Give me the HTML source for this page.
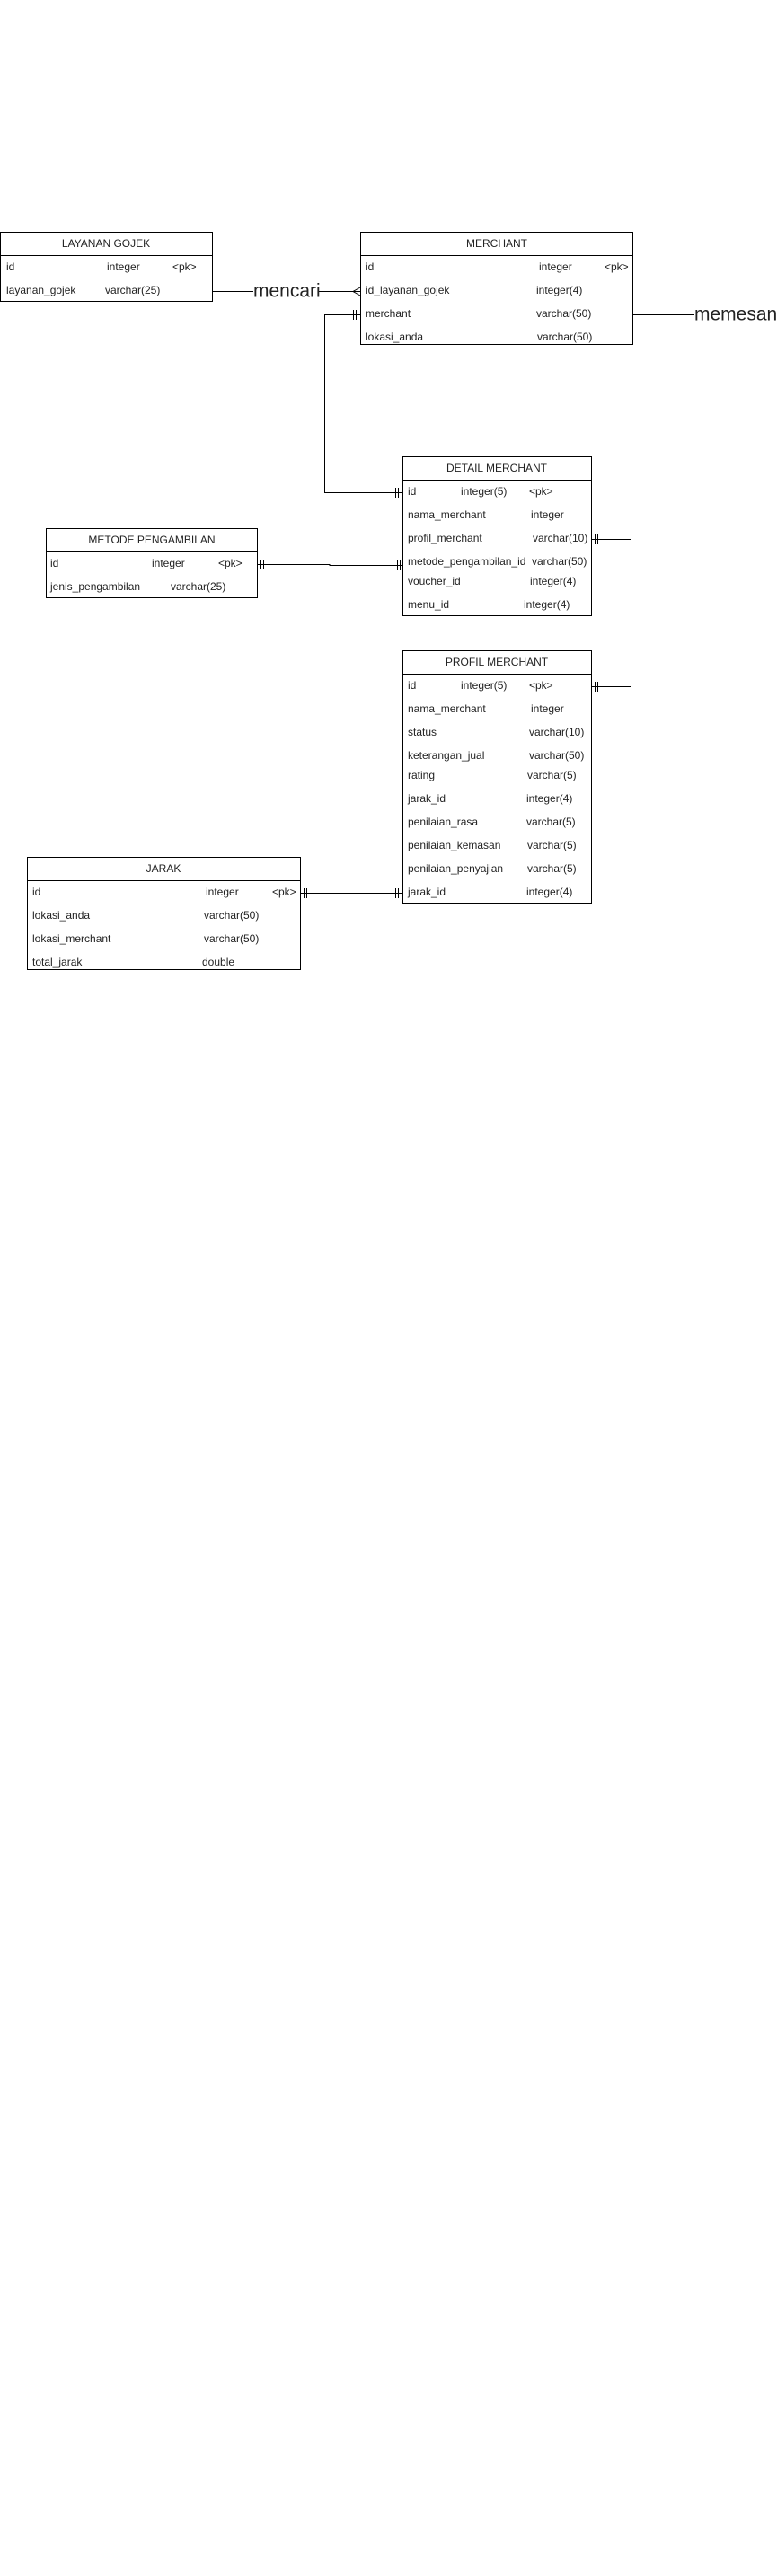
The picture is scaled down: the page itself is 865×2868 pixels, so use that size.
<!DOCTYPE html>
<html><head><meta charset="utf-8"><style>
html,body{margin:0;padding:0;background:#fff;}
svg{display:block;}
text{font-family:"Liberation Sans",Arial,sans-serif;font-size:12px;fill:#222;dominant-baseline:middle;}
.big{font-size:21px;}
</style></head><body>
<svg width="865" height="2868" viewBox="0 0 865 2868" xmlns="http://www.w3.org/2000/svg">
<g fill="none" stroke="#000" stroke-width="1">
<rect x="0.5" y="258.5" width="236" height="77"/>
<line x1="0" y1="284.5" x2="237" y2="284.5"/>
<rect x="401.5" y="258.5" width="303" height="125"/>
<line x1="401" y1="284.5" x2="705" y2="284.5"/>
<rect x="448.5" y="508.5" width="210" height="177"/>
<line x1="448" y1="534.5" x2="659" y2="534.5"/>
<rect x="51.5" y="588.5" width="235" height="77"/>
<line x1="51" y1="614.5" x2="287" y2="614.5"/>
<rect x="448.5" y="724.5" width="210" height="281"/>
<line x1="448" y1="750.5" x2="659" y2="750.5"/>
<rect x="30.5" y="954.5" width="304" height="125"/>
<line x1="30" y1="980.5" x2="335" y2="980.5"/>

<line x1="237" y1="324.5" x2="282" y2="324.5"/>
<line x1="355" y1="324.5" x2="401" y2="324.5"/>
<polyline points="401,320 393,324.5 401,329"/>
<line x1="705" y1="350.5" x2="773" y2="350.5"/>
<polyline points="401,350.5 361.5,350.5 361.5,548.5 448,548.5"/>
<line x1="393.5" y1="345" x2="393.5" y2="356"/><line x1="396.5" y1="345" x2="396.5" y2="356"/>
<line x1="440.5" y1="543" x2="440.5" y2="554"/><line x1="443.5" y1="543" x2="443.5" y2="554"/>
<polyline points="287,628.5 367,628.5 367,629.5 448,629.5"/>
<line x1="290.5" y1="623" x2="290.5" y2="634"/><line x1="293.5" y1="623" x2="293.5" y2="634"/>
<line x1="442.5" y1="624" x2="442.5" y2="635"/><line x1="445.5" y1="624" x2="445.5" y2="635"/>
<polyline points="659,600.5 702.5,600.5 702.5,764.5 659,764.5"/>
<line x1="662.5" y1="595" x2="662.5" y2="606"/><line x1="665.5" y1="595" x2="665.5" y2="606"/>
<line x1="662.5" y1="759" x2="662.5" y2="770"/><line x1="665.5" y1="759" x2="665.5" y2="770"/>
<line x1="335" y1="994.5" x2="448" y2="994.5"/>
<line x1="338.5" y1="989" x2="338.5" y2="1000"/><line x1="341.5" y1="989" x2="341.5" y2="1000"/>
<line x1="440.5" y1="989" x2="440.5" y2="1000"/><line x1="443.5" y1="989" x2="443.5" y2="1000"/>
</g>

<text class="big" x="282" y="325">mencari</text>
<text class="big" x="773" y="351">memesan</text>

<text x="118" y="272" text-anchor="middle">LAYANAN GOJEK</text>
<text x="7" y="298">id</text><text x="119" y="298">integer</text><text x="192" y="298">&lt;pk&gt;</text>
<text x="7" y="324">layanan_gojek</text><text x="117" y="324">varchar(25)</text>

<text x="553" y="272" text-anchor="middle">MERCHANT</text>
<text x="407" y="298">id</text><text x="600" y="298">integer</text><text x="673" y="298">&lt;pk&gt;</text>
<text x="407" y="324">id_layanan_gojek</text><text x="597" y="324">integer(4)</text>
<text x="407" y="350">merchant</text><text x="597" y="350">varchar(50)</text>
<text x="407" y="376">lokasi_anda</text><text x="598" y="376">varchar(50)</text>

<text x="553" y="522" text-anchor="middle">DETAIL MERCHANT</text>
<text x="454" y="548">id</text><text x="513" y="548">integer(5)</text><text x="589" y="548">&lt;pk&gt;</text>
<text x="454" y="574">nama_merchant</text><text x="591" y="574">integer</text>
<text x="454" y="600">profil_merchant</text><text x="593" y="600">varchar(10)</text>
<text x="454" y="626">metode_pengambilan_id</text><text x="592" y="626">varchar(50)</text>
<text x="454" y="648">voucher_id</text><text x="590" y="648">integer(4)</text>
<text x="454" y="674">menu_id</text><text x="583" y="674">integer(4)</text>

<text x="169" y="602" text-anchor="middle">METODE PENGAMBILAN</text>
<text x="56" y="628">id</text><text x="169" y="628">integer</text><text x="243" y="628">&lt;pk&gt;</text>
<text x="56" y="654">jenis_pengambilan</text><text x="190" y="654">varchar(25)</text>

<text x="553" y="738" text-anchor="middle">PROFIL MERCHANT</text>
<text x="454" y="764">id</text><text x="513" y="764">integer(5)</text><text x="589" y="764">&lt;pk&gt;</text>
<text x="454" y="790">nama_merchant</text><text x="591" y="790">integer</text>
<text x="454" y="816">status</text><text x="589" y="816">varchar(10)</text>
<text x="454" y="842">keterangan_jual</text><text x="589" y="842">varchar(50)</text>
<text x="454" y="864">rating</text><text x="587" y="864">varchar(5)</text>
<text x="454" y="890">jarak_id</text><text x="586" y="890">integer(4)</text>
<text x="454" y="916">penilaian_rasa</text><text x="586" y="916">varchar(5)</text>
<text x="454" y="942">penilaian_kemasan</text><text x="587" y="942">varchar(5)</text>
<text x="454" y="968">penilaian_penyajian</text><text x="587" y="968">varchar(5)</text>
<text x="454" y="994">jarak_id</text><text x="586" y="994">integer(4)</text>

<text x="182" y="968" text-anchor="middle">JARAK</text>
<text x="36" y="994">id</text><text x="229" y="994">integer</text><text x="303" y="994">&lt;pk&gt;</text>
<text x="36" y="1020">lokasi_anda</text><text x="227" y="1020">varchar(50)</text>
<text x="36" y="1046">lokasi_merchant</text><text x="227" y="1046">varchar(50)</text>
<text x="36" y="1072">total_jarak</text><text x="225" y="1072">double</text>
</svg>
</body></html>
